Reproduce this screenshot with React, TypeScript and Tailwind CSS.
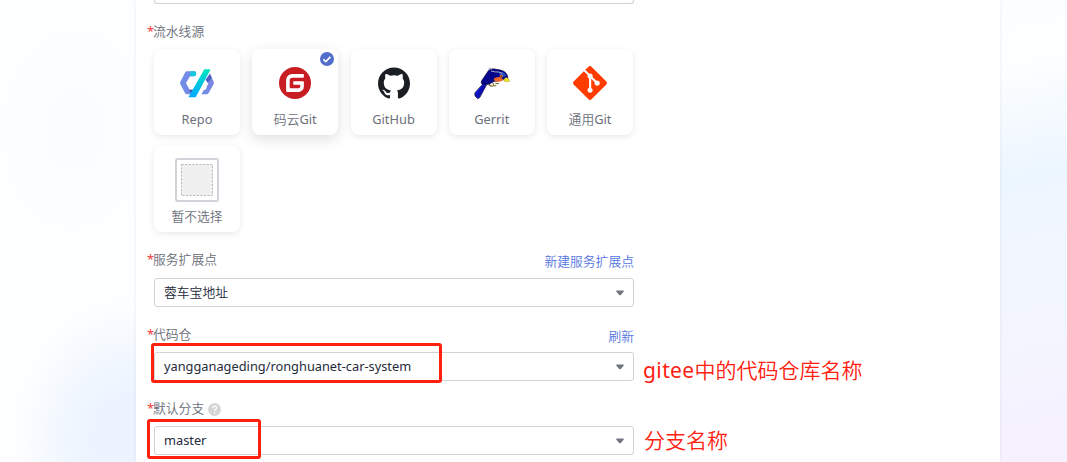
import React from "react";
import { SiGit, SiGitee, SiGithub } from "react-icons/si";

function RepoIcon() {
  return (
    <svg width="36" height="32" viewBox="130 200 108 96">
      <defs>
        <linearGradient id="slash" x1="0" y1="0" x2="0" y2="1">
          <stop offset="0" stopColor="#00e5c0" />
          <stop offset="1" stopColor="#00a8ff" />
        </linearGradient>
        <linearGradient id="hex" x1="0" y1="0" x2="1" y2="0">
          <stop offset="0" stopColor="#6f8fe6" />
          <stop offset="1" stopColor="#7b84e8" />
        </linearGradient>
      </defs>
      <path d="M178 213H153q-3 0-5 4L134 244q-2 4 0 8l14 26q2 4 6 4h12l6-14h-10L151 248l12-20h12q7-2 6-8t-3-7Z" fill="url(#hex)" />
      <path d="M164 213h12q6 1 6 7t-6 8h-13Z" fill="#16c8dd" />
      <path d="M160 268h12l-4 14Z" fill="#4050b0" />
      <path d="M223 220l11 24q1 4 0 7l-15 27q-2 4-6 4h-16l8-14h5l8-20-9-10Z" fill="url(#hex)" />
      <path d="M223 220l5 12-12 15-5-9Z" fill="#505dc0" />
      <path d="M206 207h19l-45 84h-22Z" fill="url(#slash)" />
    </svg>
  );
}

function GerritIcon() {
  return (
    <svg width="36" height="34" viewBox="252 198 108 102">
      <path d="M282 248l-26 29q-3 5-1 11l8 8 6-3 20-37Z" fill="#1018d8" stroke="#111133" strokeWidth="2" />
      <path d="M259 288l23-32M265 291l19-33" stroke="#05056a" strokeWidth="2" />
      <path d="M299 249l-2 7 8 0M309 248l2 10 8-1M316 250l11 1M309 258l-8 1" stroke="#6f6a2a" strokeWidth="3" fill="none" />
      <path d="M296 211q8-6 18-4l17 3q15 3 20 14l3 9-12 5q-16 7-30 6-14 12-32 10-9-2-5-12Z" fill="#07078c" stroke="#070735" strokeWidth="2" />
      <path d="M312 235q10-4 17-4l12 8q-8 8-22 6-9-1-7-10Z" fill="#ef6529" />
      <path d="M327 217l12-1 10 10-6 4-13-3Z" fill="#2a4ec4" />
      <circle cx="334" cy="229" r="4.5" fill="#e6751e" />
      <circle cx="334" cy="229" r="2" fill="#221100" />
      <path d="M342 238l6-6q9 3 11 12-11 3-17-1Z" fill="#f0e61e" stroke="#77711a" strokeWidth="1" />
      <path d="M297 211l1-7 8 4M303 213q14 4 23 3l10 4" stroke="#a9a6c4" strokeWidth="3" fill="none" />
    </svg>
  );
}

const cards = [
  { name: "Repo", icon: <RepoIcon /> },
  { name: "码云Git", icon: <SiGitee size={32} color="#c71d23" />, selected: true },
  { name: "GitHub", icon: <SiGithub size={32} color="#1b1f23" /> },
  { name: "Gerrit", icon: <GerritIcon /> },
  { name: "通用Git", icon: <SiGit size={34} color="#ff3c00" /> },
  {
    name: "暂不选择",
    icon: (
      <svg width="44" height="44" viewBox="0 0 44 44">
        <rect x="1" y="1" width="42" height="42" rx="2" fill="#fff" stroke="#d3d2d8" strokeWidth="2" />
        <rect x="6.5" y="6.5" width="31" height="31" fill="#f0f0f0" stroke="#b9b9bc" strokeDasharray="2.2 1.4" />
      </svg>
    ),
  },
];

function SourceCard({ name, icon, selected }: { name: string; icon: React.ReactNode; selected?: boolean }) {
  return (
    <div
      className={
        "relative flex h-[86px] w-[86px] flex-col items-center rounded-lg bg-white pt-3 " +
        (selected ? "shadow-[0_4px_14px_rgba(0,0,0,0.13)]" : "shadow-[0_2px_7px_rgba(0,0,0,0.09)]")
      }
    >
      <div className="flex h-11 items-center justify-center">{icon}</div>
      <div className="mt-1 h-5 leading-5 whitespace-nowrap text-[#6c707b]">{name}</div>
      {selected && (
        <svg className="absolute top-[3px] right-1" width="14" height="14" viewBox="0 0 14 14">
          <circle cx="7" cy="7" r="7" fill="#526ecc" />
          <path d="M3.4 7.3l2.4 2.3 4.6-4.8" fill="none" stroke="#fff" strokeWidth="1.7" />
        </svg>
      )}
    </div>
  );
}

function FieldLabel({ text, link, help }: { text: string; link?: string; help?: boolean }) {
  return (
    <div className="-ml-[7px] flex h-[45px] items-start justify-between pt-[17px] leading-5 text-[#696d78]">
      <div className="flex items-center">
        <span className="w-1.5 text-[#f5383a]">*</span>
        <span>{text}</span>
        {help && (
          <svg className="mt-0.5 ml-1" width="13" height="13" viewBox="0 0 13 13">
            <circle cx="6.5" cy="6.5" r="6.5" fill="#d5d5d6" />
            <path d="M4.6 5.2q0-2 2-2t2 1.8q0 1-1.2 1.6-.8.5-.8 1.3M6.6 9v1.2" fill="none" stroke="#fff" strokeWidth="1.2" />
          </svg>
        )}
      </div>
      {link && <a className="mt-0.5 text-[#5475e0]">{link}</a>}
    </div>
  );
}

function Select({ value, children }: { value: string; children?: React.ReactNode }) {
  return (
    <div className="relative flex h-[29px] items-center justify-between rounded-[3px] border border-[#d2d3d7] bg-white pr-[9px] pl-[9px] text-[#252b3a]">
      <span className="-mt-0.5 leading-5 whitespace-nowrap">{value}</span>
      <svg width="8" height="6" viewBox="0 0 8 6">
        <path d="M.8.5h6.4q1 .3.4 1.2L4.8 5q-.8.7-1.6 0L.4 1.7Q-.2.8.8.5Z" fill="#71757f" />
      </svg>
      {children}
    </div>
  );
}

export default function App() {
  return (
    <div className="flex h-[462px] w-[1067px] overflow-hidden bg-[#fdfeff] font-['Noto_Sans','Noto_Sans_CJK_SC_DemiLight','Noto_Sans_CJK_SC',sans-serif] text-[12.8px]">
      <div className="w-[136px] bg-[radial-gradient(ellipse_110px_140px_at_125px_440px,#eaf3ff,#ecf4ff_35%,transparent),radial-gradient(ellipse_80px_110px_at_75px_130px,#f9fdff,transparent)]" />
      <main className="relative h-full w-[864px] bg-white pl-[18px] shadow-[0_0_4px_rgba(0,0,0,0.08)]">
        <div className="w-[480px]">
          <div className="h-1 rounded-b-[3px] border-x border-b border-[#d2d3d7]" />
          <FieldLabel text="流水线源" />
          <div className="grid w-[479px] grid-cols-[repeat(5,86px)] justify-between gap-y-[11px]">
            {cards.map((card) => (
              <SourceCard key={card.name} {...card} />
            ))}
          </div>
          <div className="pb-px">
            <FieldLabel text="服务扩展点" link="新建服务扩展点" />
          </div>
          <Select value="蓉车宝地址" />
          <FieldLabel text="代码仓" link="刷新" />
          <Select value="yangganageding/ronghuanet-car-system">
            <div className="absolute -top-2.5 -left-1 h-10 w-[291px] rounded-[3px] border-3 border-[#ff2010]" />
            <div className="absolute top-px left-[488px] text-[21px] leading-8 whitespace-nowrap text-[#ff2010]"><span className="tracking-[0.4px]">gitee</span>中的代码仓库名称</div>
          </Select>
          <FieldLabel text="默认分支" help />
          <Select value="master">
            <div className="absolute -top-2 -left-2 h-10 w-[114px] rounded-[3px] border-3 border-[#ff2010]" />
            <div className="absolute -top-[3px] left-[489px] text-[21px] leading-8 whitespace-nowrap text-[#ff2010]">分支名称</div>
          </Select>
        </div>
      </main>
      <div className="w-[67px] bg-[linear-gradient(168deg,#fbfeff,#fdfeff_14%,#ecf6ff_38%,#f1f6ff_52%,#f3f6ff_68%,#f5f1fe_92%)]" />
    </div>
  );
}
